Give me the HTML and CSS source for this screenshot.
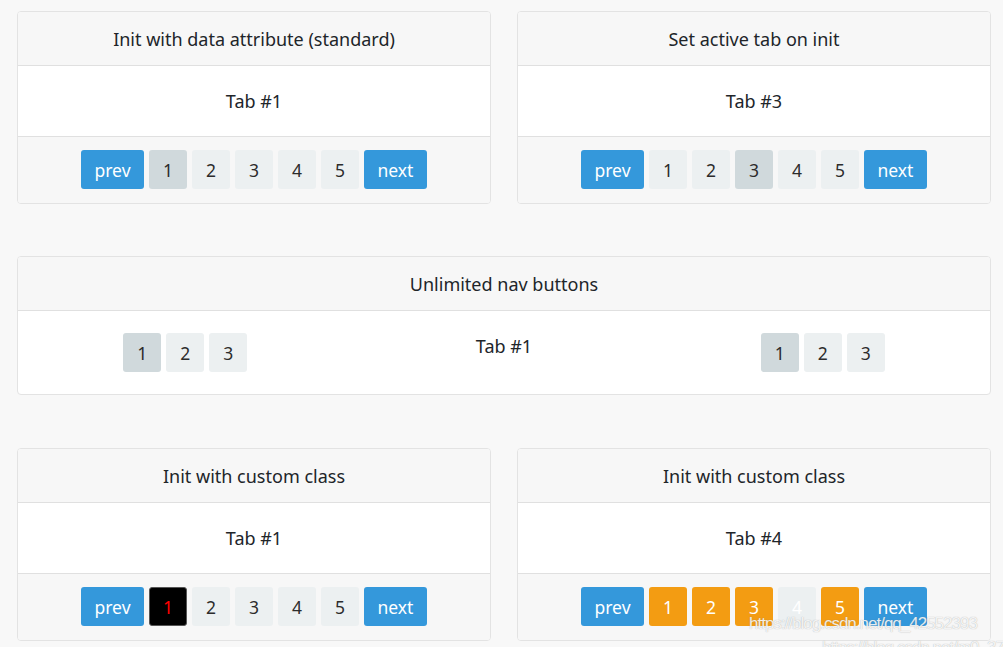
FILE: index.html
```html
<!DOCTYPE html>
<html>
<head>
<meta charset="utf-8">
<link rel="stylesheet" href="styles.css">
</head>
<body>
<div class="page">
  <div class="row two">
    <div class="card">
      <div class="card-header">Init with data attribute (standard)</div>
      <div class="card-body">Tab #1</div>
      <div class="card-footer">
        <div class="nav">
          <span class="btn blue">prev</span>
          <span class="btn num active">1</span>
          <span class="btn num">2</span>
          <span class="btn num">3</span>
          <span class="btn num">4</span>
          <span class="btn num">5</span>
          <span class="btn blue">next</span>
        </div>
      </div>
    </div>
    <div class="card">
      <div class="card-header">Set active tab on init</div>
      <div class="card-body">Tab #3</div>
      <div class="card-footer">
        <div class="nav">
          <span class="btn blue">prev</span>
          <span class="btn num">1</span>
          <span class="btn num">2</span>
          <span class="btn num active">3</span>
          <span class="btn num">4</span>
          <span class="btn num">5</span>
          <span class="btn blue">next</span>
        </div>
      </div>
    </div>
  </div>

  <div class="row one">
    <div class="card">
      <div class="card-header">Unlimited nav buttons</div>
      <div class="card-body three">
        <div class="nav">
          <span class="btn num active">1</span>
          <span class="btn num">2</span>
          <span class="btn num">3</span>
        </div>
        <div class="mid">Tab #1</div>
        <div class="nav">
          <span class="btn num active">1</span>
          <span class="btn num">2</span>
          <span class="btn num">3</span>
        </div>
      </div>
    </div>
  </div>

  <div class="row two last">
    <div class="card">
      <div class="card-header">Init with custom class</div>
      <div class="card-body">Tab #1</div>
      <div class="card-footer">
        <div class="nav">
          <span class="btn blue">prev</span>
          <span class="btn num dark">1</span>
          <span class="btn num">2</span>
          <span class="btn num">3</span>
          <span class="btn num">4</span>
          <span class="btn num">5</span>
          <span class="btn blue">next</span>
        </div>
      </div>
    </div>
    <div class="card">
      <div class="card-header">Init with custom class</div>
      <div class="card-body">Tab #4</div>
      <div class="card-footer">
        <div class="nav">
          <span class="btn blue">prev</span>
          <span class="btn num orange">1</span>
          <span class="btn num orange">2</span>
          <span class="btn num orange">3</span>
          <span class="btn num ghost">4</span>
          <span class="btn num orange">5</span>
          <span class="btn blue">next</span>
        </div>
      </div>
    </div>
  </div>
</div>
<div class="wm-box">
  <div class="watermark">https://blog.csdn.net/qq_42552393</div>
  <div class="watermark second">https://blog.csdn.net/m0_37308</div>
</div>
</body>
</html>
```
FILE: styles.css
```css
html, body {
  margin: 0;
  padding: 0;
  background: #f8f8f8;
  height: 647px;
  overflow: hidden;
}
body {
  font-family: "Noto Sans", "Open Sans", sans-serif;
  color: #212529;
  position: relative;
}
.page {
  padding: 11px 12px 0 17px;
  display: flex;
  flex-direction: column;
  gap: 52px;
}
.row {
  display: grid;
  gap: 26px;
}
.row.two { grid-template-columns: 1fr 1fr; }
.row.one { grid-template-columns: 1fr; }
.row.last { margin-top: 1px; }
.card {
  border: 1px solid #e3e3e3;
  border-radius: 4px;
  background: #fff;
  overflow: hidden;
}
.card-header {
  background: #f7f7f7;
  border-bottom: 1px solid #e0e0e0;
  height: 53px;
  display: flex;
  align-items: center;
  justify-content: center;
  font-size: 18px;
}
.card-body {
  padding: 22px 0;
  line-height: 26px;
  text-align: center;
  font-size: 18px;
}
.card-body.three {
  display: grid;
  grid-template-columns: 1fr 1fr 1fr;
  padding: 22px 8px 22px 8px;
  align-items: start;
}
.card-footer {
  background: #f7f7f7;
  border-top: 1px solid #e0e0e0;
  padding: 13px 0 14px;
}
.nav {
  display: flex;
  justify-content: center;
  gap: 5px;
}
.btn {
  height: 39px;
  border-radius: 3px;
  display: flex;
  align-items: center;
  justify-content: center;
  font-size: 17.5px;
  box-sizing: border-box;
}
.btn.blue {
  background: #3498db;
  color: #fff;
  width: 63px;
}
.btn.num {
  width: 38px;
  background: #ecf0f1;
  color: #2c2c2c;
}
.btn.num.active {
  background: #d0d9dc;
}
.btn.num.dark {
  background: #000;
  color: #f00;
  border: 1px solid #555;
}
.btn.num.orange {
  background: #f39c12;
  color: #fff;
}
.btn.num.ghost {
  background: #ecf0f1;
  color: #fff;
}
.wm-box {
  position: absolute;
  left: 740px;
  top: 604px;
  width: 263px;
  height: 43px;
  overflow: hidden;
}
.watermark {
  position: absolute;
  left: 9px;
  top: 10px;
  font-family: "Liberation Sans", Arial, sans-serif;
  font-size: 17px;
  letter-spacing: -1px;
  color: rgba(255,255,255,0.85);
  text-shadow: 0 0 1px rgba(120,120,120,0.6);
  white-space: nowrap;
}
.watermark.second {
  left: 82px;
  top: 34px;
}
```
